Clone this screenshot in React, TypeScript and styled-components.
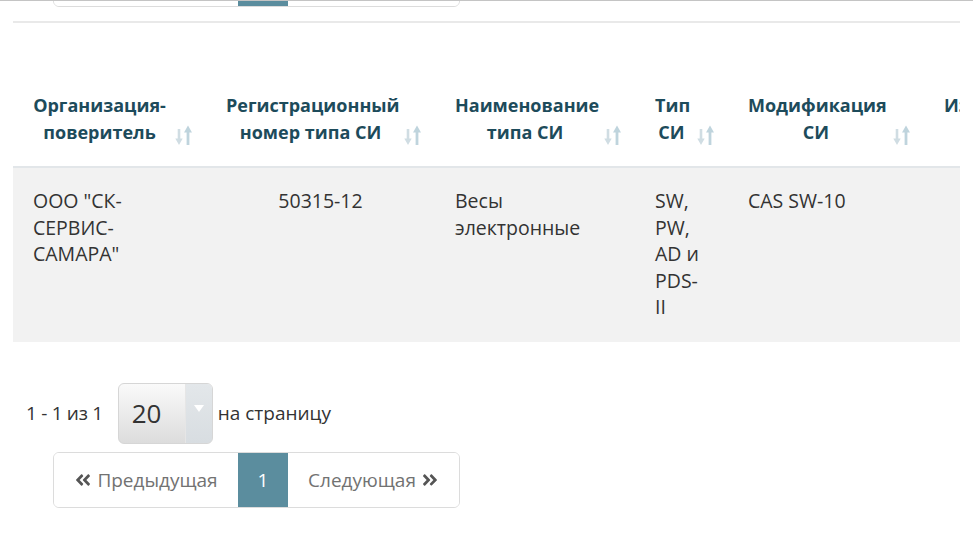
import React from 'react';
import styled, { createGlobalStyle } from 'styled-components';
import { FaAngleDoubleLeft, FaAngleDoubleRight } from 'react-icons/fa';

const Global = createGlobalStyle`
  html, body { margin: 0; padding: 0; background: #fff; }
  body { font-family: "Open Sans", "Noto Sans", sans-serif; color: #333; }
`;

const Page = styled.div`
  width: 973px;
  height: 548px;
  overflow: hidden;
  border-top: 1px solid #c4c4c4;
  box-sizing: border-box;
`;

const PagerClip = styled.div`
  height: 6px;
  overflow: hidden;
  display: flex;
  align-items: flex-end;
  padding-left: 53px;
`;

const Pager = styled.nav<{ $offset?: number }>`
  display: inline-flex;
  flex: none;
  height: 56px;
  box-sizing: border-box;
  border: 1px solid #dcdcdc;
  border-radius: 6px;
  overflow: hidden;
  margin-left: ${(p) => p.$offset ?? 0}px;
`;

const PageLink = styled.span<{ $active?: boolean; $w: number }>`
  display: flex;
  align-items: center;
  justify-content: center;
  gap: 5px;
  width: ${(p) => p.$w}px;
  font-size: 19px;
  color: ${(p) => (p.$active ? '#fff' : '#727272')};
  background: ${(p) => (p.$active ? '#5b8d9e' : '#fff')};
  svg { color: #555; font-size: 18px; }
`;

const Divider = styled.div`
  margin: 14px 13px 0;
  height: 2px;
  background: #e9e9e9;
`;

const TableWrap = styled.div`
  margin: 49px 13px 0;
  overflow: hidden;
`;

const Table = styled.table`
  border-collapse: collapse;
  table-layout: fixed;
  width: 1086px;
`;

const Th = styled.th`
  position: relative;
  padding: 20px 40px 20px 20px;
  text-align: center;
  vertical-align: top;
  font-size: 18px;
  line-height: 27px;
  font-weight: 700;
  color: #1d4b5b;
  border-bottom: 2px solid #e2e6e9;
`;

const SortIcon = styled.svg`
  position: absolute;
  right: 13px;
  bottom: 20px;
  width: 18px;
  height: 21px;
`;

const Td = styled.td<{ $center?: boolean; $pr?: number }>`
  padding: 20px ${(p) => p.$pr ?? 20}px 21px 20px;
  vertical-align: top;
  font-size: 19.5px;
  line-height: 26.5px;
  color: #333;
  background: #f2f2f2;
  text-align: ${(p) => (p.$center ? 'center' : 'left')};
`;

const Footer = styled.div`
  margin-top: 41px;
  padding-left: 26px;
`;

const InfoRow = styled.div`
  display: flex;
  align-items: center;
  font-size: 19px;
  color: #333;
  margin-bottom: 8px;
`;

const Count = styled.span`
  margin-right: 15px;
  letter-spacing: -0.3px;
`;

const Select = styled.div`
  display: flex;
  width: 95px;
  height: 61px;
  box-sizing: border-box;
  border: 1px solid #d6d6d6;
  border-radius: 6px;
  overflow: hidden;
  background: linear-gradient(#fafafa, #dcdcdc);
  margin-right: 5px;
`;

const SelectValue = styled.span`
  flex: 1;
  display: flex;
  align-items: center;
  padding-left: 13px;
  font-size: 26px;
  color: #333;
`;

const SelectArrow = styled.span`
  width: 27px;
  display: flex;
  justify-content: center;
  padding-top: 21px;
  box-sizing: border-box;
  background: linear-gradient(#e3e7ea, #d8dde1);
  border-left: 1px solid #e6e6e6;
  &::after {
    content: '';
    width: 0;
    height: 0;
    border-left: 5px solid transparent;
    border-right: 5px solid transparent;
    border-top: 7px solid #fff;
  }
`;

const Sort = () => (
  <SortIcon viewBox="0 0 18 21">
    <line x1="4" y1="4" x2="4" y2="16" stroke="#d0dde3" strokeWidth="2.6" />
    <polygon points="0.3,13.5 4,20 7.7,13.5" fill="#d0dde3" />
    <line x1="13" y1="20" x2="13" y2="5" stroke="#bfd4dd" strokeWidth="2.8" />
    <polygon points="9,7.5 13,0.5 17,7.5" fill="#bfd4dd" />
  </SortIcon>
);

const PagerBlock = ({ offset, labels = true }: { offset?: number; labels?: boolean }) => (
  <Pager $offset={offset} aria-hidden={!labels}>
    <PageLink $w={184}>
      {labels && (
        <>
          <FaAngleDoubleLeft />
          Предыдущая
        </>
      )}
    </PageLink>
    <PageLink $w={50} $active>
      {labels && '1'}
    </PageLink>
    <PageLink $w={171}>
      {labels && (
        <>
          Следующая
          <FaAngleDoubleRight />
        </>
      )}
    </PageLink>
  </Pager>
);

const headers = [
  'Организация-поверитель',
  'Регистрационный номер типа СИ',
  'Наименование типа СИ',
  'Тип СИ',
  'Модификация СИ',
  'Изготовитель',
];
const widths = [193, 229, 200, 93, 196, 175];

export default function App() {
  return (
    <>
      <Global />
      <Page>
        <PagerClip>
          <PagerBlock labels={false} />
        </PagerClip>
        <Divider />
        <TableWrap>
          <Table>
            <colgroup>
              {widths.map((w, i) => (
                <col key={i} style={{ width: w }} />
              ))}
            </colgroup>
            <thead>
              <tr>
                {headers.map((h) => (
                  <Th key={h}>
                    {h}
                    <Sort />
                  </Th>
                ))}
              </tr>
            </thead>
            <tbody>
              <tr>
                <Td>ООО "СК-СЕРВИС-САМАРА"</Td>
                <Td $center>50315-12</Td>
                <Td>Весы электронные</Td>
                <Td $pr={28}>SW, PW, AD и PDS-II</Td>
                <Td>CAS SW-10</Td>
                <Td />
              </tr>
            </tbody>
          </Table>
        </TableWrap>
        <Footer>
          <InfoRow>
            <Count>1 - 1 из 1</Count>
            <Select>
              <SelectValue>20</SelectValue>
              <SelectArrow />
            </Select>
            на страницу
          </InfoRow>
          <PagerBlock offset={27} />
        </Footer>
      </Page>
    </>
  );
}
